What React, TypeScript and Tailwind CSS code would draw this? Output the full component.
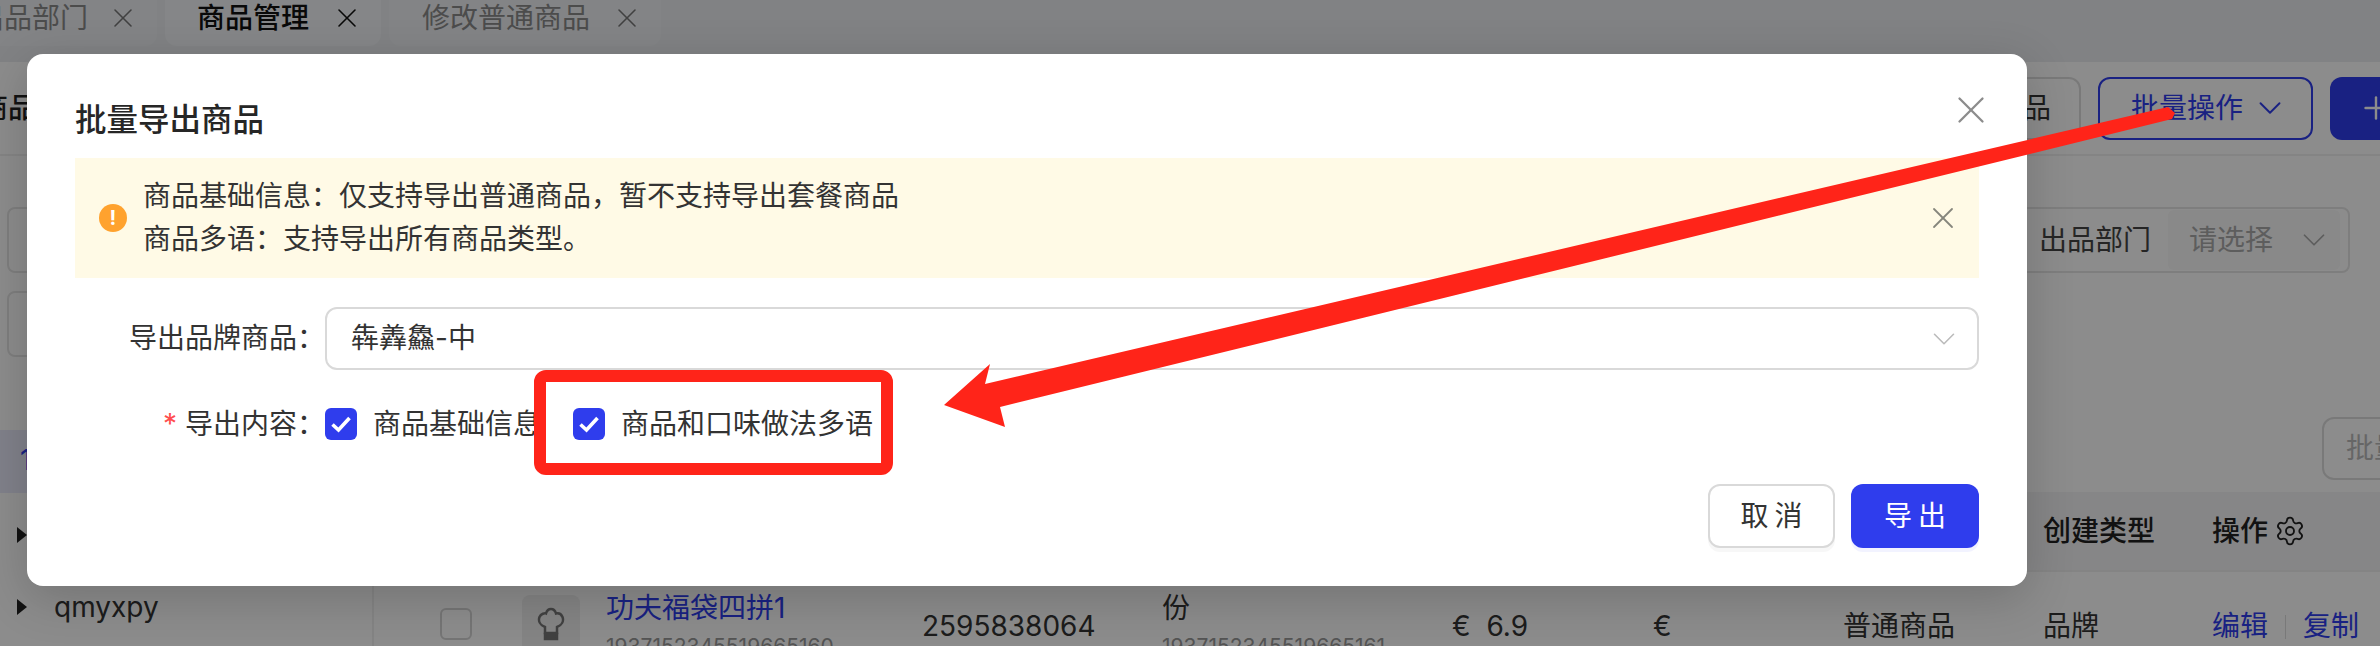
import { ChevronDown, Plus, Settings, X } from "lucide-react";

const FONT = "font-['Inter','Noto_Sans_CJK_SC',sans-serif]";
const TEXT = "text-[28px] leading-[43px]";
const TABLE_COLS = "grid-cols-[82px_84px_316px_240px_290px_201px_190px_200px_169px_1fr]";

function Tab({
  label,
  width,
  pad,
  active,
  className = "",
}: {
  label: string;
  width: string;
  pad: string;
  active?: boolean;
  className?: string;
}) {
  return (
    <div
      className={`flex h-[46px] items-center justify-between rounded-b-xl pb-[10px] ${width} ${pad} ${className} ${
        active ? "bg-[#f2f4f7] font-medium text-[#111]" : "bg-[#eff1f4] text-[#8b8b8b]"
      }`}
    >
      <span className={TEXT}>{label}</span>
      <X size={32} strokeWidth={1.2} className={active ? "text-[#111]" : "text-[#777]"} />
    </div>
  );
}

function CheckBox() {
  return (
    <span className="flex h-8 w-8 shrink-0 items-center justify-center rounded-md bg-[#2f3ded]">
      <svg width="22" height="18" viewBox="0 0 22 18" fill="none">
        <path d="M2.500 9.500 8.500 15 19.500 3" stroke="#fff" strokeWidth="3.6" />
      </svg>
    </span>
  );
}

function PageBehind() {
  return (
    <div className="flex h-[646px] flex-col overflow-hidden bg-[#ebedf1]">
      <div className="flex h-[62px] shrink-0 gap-2">
        <Tab label="出品部门" width="w-[181px]" pad="pr-[18px]" className="-ml-6" />
        <Tab label="商品管理" width="w-[216px]" pad="pl-8 pr-[18px]" active />
        <Tab label="修改普通商品" width="w-[272px]" pad="pl-[33px] pr-[18px]" />
      </div>

      <div className="flex flex-1 flex-col bg-white">
        <div className="flex h-[94px] shrink-0 items-center justify-between border-b-2 border-[#f0f0f0]">
          <span className={`-ml-5 font-medium text-[#222] ${TEXT}`}>商品</span>
          <div className="flex items-center gap-[17px]">
            <div className={`flex h-[63px] w-[200px] items-center justify-end rounded-xl border-2 border-[#ddd] pr-[28px] text-[#333] ${TEXT}`}>
              导入商品
            </div>
            <div className={`flex h-[63px] w-[215px] items-center gap-[8px] rounded-xl border-2 border-[#2f3ded] pl-[31px] text-[#2f3ded] ${TEXT}`}>
              批量操作
              <ChevronDown size={38} strokeWidth={1.2} />
            </div>
            <div className="-mr-[60px] flex h-[63px] w-[110px] items-center rounded-xl bg-[#2f3ded] pl-[28px] text-white">
              <Plus size={36} strokeWidth={1.6} />
            </div>
          </div>
        </div>

        <div className="flex justify-between pl-[7px] pr-[30px] pt-[51px]">
          <div className="flex flex-col gap-[18px]">
            <div className="h-[66px] w-[300px] rounded-lg border-2 border-[#e6e6e6]" />
            <div className="h-[66px] w-[300px] rounded-lg border-2 border-[#e6e6e6]" />
          </div>
          <div className="flex h-[66px] w-[420px] items-center justify-between rounded-lg border-2 border-[#e6e6e6] pl-[107px] pr-[8px]">
            <span className={`text-[#444] ${TEXT}`}>出品部门</span>
            <div className={`flex h-[60px] w-[172px] items-center justify-between rounded-md bg-[#f9f9f9] pl-[21px] pr-[7px] text-[#aaa] ${TEXT}`}>
              请选择
              <ChevronDown size={38} strokeWidth={1.1} />
            </div>
          </div>
        </div>

        <div className="flex flex-1">
          <div className="w-[374px] shrink-0 border-r-2 border-[#f0f0f0] pt-[73px]">
            <div className={`h-[63px] bg-[#e9ecfb] pl-[20px] pt-[9px] text-[#2f3ded] ${TEXT}`}>1</div>
            <div className="mt-[6px] flex h-[72px] items-center pl-[17px]">
              <span className="h-0 w-0 border-y-[8px] border-l-[10px] border-y-transparent border-l-[#222]" />
            </div>
            <div className={`flex h-[72px] items-center gap-[27px] pl-[17px] text-[#333] ${TEXT}`}>
              <span className="h-0 w-0 border-y-[8px] border-l-[10px] border-y-transparent border-l-[#222]" />
              qmyxpy
            </div>
          </div>

          <div className="flex min-w-0 flex-1 flex-col">
            <div className="flex h-[135px] shrink-0 items-start justify-end pt-[60px]">
              <div className={`-mr-[40px] flex h-[63px] w-[98px] items-center rounded-xl border-2 border-[#ddd] pl-[22px] text-[#bbb] ${TEXT}`}>
                批量
              </div>
            </div>
            <div className={`grid h-[78px] shrink-0 items-center bg-[#f5f5f6] pl-[66px] font-medium text-[#222] ${TABLE_COLS}`}>
              <span className={`col-start-9 ${TEXT}`}>创建类型</span>
              <span className={`flex items-center gap-[6px] ${TEXT}`}>
                操作
                <Settings size={32} strokeWidth={1.4} />
              </span>
            </div>
            <div className={`grid items-start border-t-2 border-[#f0f0f0] pl-[66px] pt-[15px] text-[#333] ${TEXT} ${TABLE_COLS}`}>
              <span className="mt-[21px] h-8 w-8 rounded-md border-2 border-[#d5d5d5]" />
              <span className="mt-[8px] flex h-[58px] w-[58px] items-center justify-center rounded-lg bg-[#f0f0f0]">
                <svg width="28" height="34" viewBox="0 0 28 34" fill="none" stroke="#777" strokeWidth="2.5">
                  <path d="M8 20C3 18 1 14 2.500 10 4 6.500 8 6 9 6.500 10 3 12 2 14 2s4 1 5 4.500C21 6 24 6.500 25.500 10c1.500 4-.5 8-5.500 10v6H8Z" />
                  <path d="M8 27h12v5H8Z" fill="#777" />
                </svg>
              </span>
              <div>
                <div className="text-[#2f3ded]">功夫福袋四拼1</div>
                <div className="mt-[3px] text-[21px] leading-7 text-[#999]">1937152345519665160</div>
              </div>
              <span className="mt-[18px]">2595838064</span>
              <div>
                <div>份</div>
                <div className="mt-[3px] text-[21px] leading-7 text-[#999]">1937152345519665161</div>
              </div>
              <span className="mt-[18px] whitespace-pre">€  6.9</span>
              <span className="mt-[18px]">€</span>
              <span className="mt-[18px]">普通商品</span>
              <span className="mt-[18px]">品牌</span>
              <div className="mt-[18px] flex items-center gap-[17px] text-[#2f3ded]">
                <span>编辑</span>
                <span className="h-6 w-px bg-[#ddd]" />
                <span>复制</span>
              </div>
            </div>
          </div>
        </div>
      </div>
    </div>
  );
}

function ExportDialog() {
  return (
    <div className="absolute left-[27px] top-[54px] flex h-[532px] w-[2000px] flex-col rounded-2xl bg-white px-[48px] shadow-[0_12px_48px_rgba(0,0,0,0.18)]">
      <div className="flex h-[104px] shrink-0 items-center justify-between pt-[28px]">
        <h2 className="text-[31.5px] font-medium leading-[44px] text-[#262626]">批量导出商品</h2>
        <X size={46} strokeWidth={1.2} className="-mr-[15px] -mt-[20px] text-[#8c8c8c]" />
      </div>

      <div className={`flex h-[120px] shrink-0 items-center bg-[#fffae6] pl-[24px] pr-[18px] text-[#333] ${TEXT}`}>
        <span className="mr-[16px] flex h-7 w-7 shrink-0 items-center justify-center rounded-full bg-[#ffa22e] text-[20px] font-bold leading-none text-white">
          !
        </span>
        <div className="flex-1">
          <div>商品基础信息：仅支持导出普通商品，暂不支持导出套餐商品</div>
          <div>商品多语：支持导出所有商品类型。</div>
        </div>
        <X size={36} strokeWidth={1.2} className="text-[#85857c]" />
      </div>

      <div className={`mt-[29px] flex items-center text-[#333] ${TEXT}`}>
        <label className="w-[236px] shrink-0 whitespace-nowrap pl-[54px]">导出品牌商品：</label>
        <div className="ml-[14px] flex h-[63px] flex-1 items-center justify-between rounded-xl border-2 border-[#d9d9d9] pl-[24px] pr-[14px]">
          <span>犇羴鱻-中</span>
          <ChevronDown size={38} strokeWidth={1} className="text-[#bbb]" />
        </div>
      </div>

      <div className={`mt-[22px] flex h-[64px] items-center text-[#333] ${TEXT}`}>
        <label className="w-[236px] shrink-0 whitespace-nowrap pl-[88px]">
          <span className="inline-block w-[22px] text-[#ff4d4f]">*</span>导出内容：
        </label>
        <div className="ml-[14px] flex items-center gap-[16px]">
          <CheckBox />
          <span className="w-[166px] whitespace-nowrap">商品基础信息</span>
        </div>
        <div className="ml-[34px] flex items-center gap-[16px]">
          <CheckBox />
          <span>商品和口味做法多语</span>
        </div>
      </div>

      <div className="mt-[28px] flex justify-end gap-4">
        <button className={`h-[64px] w-[127px] rounded-xl border-2 border-[#d9d9d9] bg-white pl-[6px] tracking-[6px] text-[#333] shadow-[0_4px_0_#f7f7f7] ${TEXT}`}>
          取消
        </button>
        <button className={`h-[64px] w-[128px] rounded-xl bg-[#2f3ded] pl-[6px] tracking-[6px] text-white shadow-[0_4px_0_#f2f3ff] ${TEXT}`}>
          导出
        </button>
      </div>
    </div>
  );
}

export default function App() {
  return (
    <div className={`relative h-[646px] w-[2380px] overflow-hidden ${FONT}`}>
      <PageBehind />
      <div className="absolute inset-0 bg-black/45" />
      <ExportDialog />

      {/* red annotation drawn over the screenshot */}
      <div className="absolute left-[534px] top-[370px] h-[105px] w-[359px] rounded-xl border-[12px] border-[#ff2419]" />
      <svg className="absolute left-0 top-0" width="2380" height="646" viewBox="0 0 2380 646">
        <polygon points="944,405 990,364 985,384 2168,107 2175,113 2172,119 1000,407 1005,427" fill="#ff2419" />
      </svg>
    </div>
  );
}
